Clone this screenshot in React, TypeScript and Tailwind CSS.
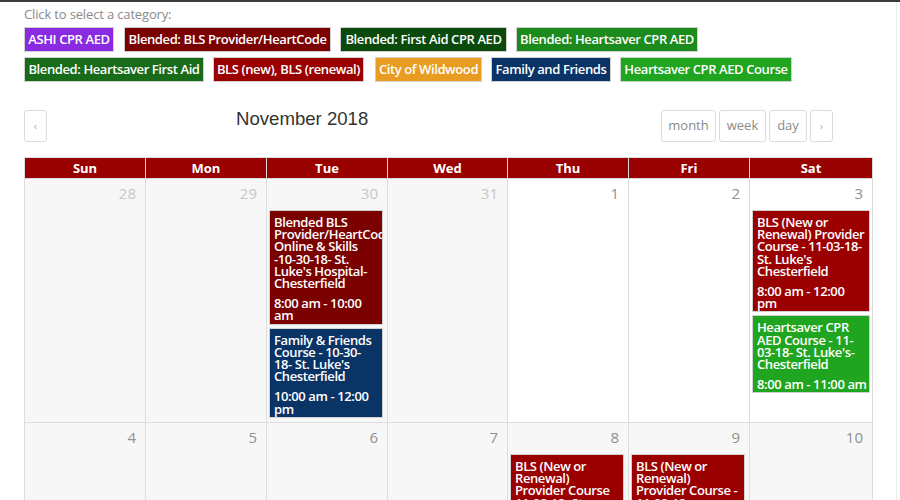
import React from "react";

type Tag = { label: string; cls: string };

const row1: Tag[] = [
  { label: "ASHI CPR AED", cls: "w-[90px] bg-[#8a2be2]" },
  { label: "Blended: BLS Provider/HeartCode", cls: "ml-[10px] w-[207px] bg-[#7b0000]" },
  { label: "Blended: First Aid CPR AED", cls: "ml-[9px] w-[167px] bg-[#0b4a0b]" },
  { label: "Blended: Heartsaver CPR AED", cls: "ml-[9px] w-[182px] bg-[#1c8a1c]" },
];
const row2: Tag[] = [
  { label: "Blended: Heartsaver First Aid", cls: "w-[180px] bg-[#186b18]" },
  { label: "BLS (new), BLS (renewal)", cls: "ml-[9px] w-[151px] bg-[#9b0000]" },
  { label: "City of Wildwood", cls: "ml-[11px] w-[107px] bg-[#e89c22]" },
  { label: "Family and Friends", cls: "ml-[9px] w-[120px] bg-[#0a3366]" },
  { label: "Heartsaver CPR AED Course", cls: "ml-[9px] w-[172px] bg-[#20a520]" },
];

type Ev = { lines: string[]; time: string[]; bg: string; mr?: string };

type Day = { n: number; other?: boolean; gray?: boolean; events?: Ev[] };

const week1: Day[] = [
  { n: 28, other: true, gray: true },
  { n: 29, other: true, gray: true },
  {
    n: 30,
    other: true,
    gray: true,
    events: [
      {
        lines: ["Blended BLS", "Provider/HeartCode", "Online & Skills", "-10-30-18- St.", "Luke's Hospital-", "Chesterfield"],
        time: ["8:00 am - 10:00", "am"],
        bg: "bg-[#7b0000]",
      },
      {
        lines: ["Family & Friends", "Course - 10-30-", "18- St. Luke's", "Chesterfield"],
        time: ["10:00 am - 12:00", "pm"],
        bg: "bg-[#0a3366]",
      },
    ],
  },
  { n: 31, other: true, gray: true },
  { n: 1 },
  { n: 2 },
  {
    n: 3,
    events: [
      {
        lines: ["BLS (New or", "Renewal) Provider", "Course - 11-03-18-", "St. Luke's", "Chesterfield"],
        time: ["8:00 am - 12:00", "pm"],
        bg: "bg-[#9b0000]",
        mr: "mr-[2px]",
      },
      {
        lines: ["Heartsaver CPR", "AED Course - 11-", "03-18- St. Luke's-", "Chesterfield"],
        time: ["8:00 am - 11:00 am"],
        bg: "bg-[#20a520]",
        mr: "mr-[2px]",
      },
    ],
  },
];

const week2: Day[] = [
  { n: 4, gray: true },
  { n: 5, gray: true },
  { n: 6, gray: true },
  { n: 7, gray: true },
  {
    n: 8,
    gray: true,
    events: [
      {
        lines: ["BLS (New or", "Renewal)", "Provider Course", "11-08-18- St."],
        time: [],
        bg: "bg-[#9b0000]",
      },
    ],
  },
  {
    n: 9,
    gray: true,
    events: [
      {
        lines: ["BLS (New or", "Renewal)", "Provider Course -", "11-09-18-"],
        time: [],
        bg: "bg-[#9b0000]",
      },
    ],
  },
  { n: 10, gray: true },
];

function EventBox({ ev, idx }: { ev: Ev; idx: number }) {
  return (
    <div
      className={`${idx === 0 ? "" : "mt-[3px]"} ml-[2px] ${ev.mr ?? "mr-[4px]"} ${ev.bg} border border-[#d2d2d2] pt-[5px] pl-[4px] pr-[2px] pb-[2px] text-white text-[13px] tracking-[-0.4px] font-semibold overflow-hidden`}
    >
      {ev.lines.map((l, i) => (
        <div key={i} className="leading-[12.2px] whitespace-nowrap">
          {l}
        </div>
      ))}
      {ev.time.length > 0 && (
        <div className="mt-[8px]">
          {ev.time.map((l, i) => (
            <div key={i} className="leading-[12.2px] whitespace-nowrap">
              {l}
            </div>
          ))}
        </div>
      )}
      {ev.time.length === 0 && <div className="h-[40px]" />}
    </div>
  );
}

function Cell({ d, h }: { d: Day; h: string }) {
  return (
    <div className={`${h} border-r border-b border-[#dddddd] ${d.gray ? "bg-[#f7f7f7]" : "bg-white"} overflow-hidden`}>
      <div
        className={`h-[31px] pt-[4px] pr-[9px] text-right text-[15px] leading-[20px] ${
          d.other ? "text-[#c6c6c6]" : "text-[#909090]"
        }`}
      >
        {d.n}
      </div>
      {d.events?.map((ev, i) => (
        <EventBox key={i} ev={ev} idx={i} />
      ))}
    </div>
  );
}

function Btn({ children, cls }: { children: React.ReactNode; cls: string }) {
  return (
    <div
      className={`${cls} h-[32px] flex items-center justify-center border border-[#dcdcdc] rounded-[3px] bg-white text-[#8a8a8a] text-[13px]`}
    >
      {children}
    </div>
  );
}

const cols = "grid grid-cols-[121px_121px_121px_120px_121px_121px_123px]";

export default function App() {
  return (
    <div className="w-[900px] h-[500px] overflow-hidden bg-white border-t-2 border-[#3c3c3c] font-['Open_Sans',sans-serif]">
      <div className="w-[897px] h-full border-r border-[#ebebeb] pl-[24px]">
        <div className="pt-[3px] text-[13px] tracking-[-0.15px] leading-[18px] text-[#8a8a8a]">Click to select a category:</div>
        <div className="mt-[4px] flex flex-col gap-[5px]">
          {[row1, row2].map((row, ri) => (
            <div key={ri} className="flex">
              {row.map((t) => (
                <div
                  key={t.label}
                  className={`${t.cls} h-[25px] border border-[#d0d0d0] flex items-center justify-center text-white text-[13px] tracking-[-0.4px] font-semibold whitespace-nowrap overflow-hidden`}
                >
                  {t.label}
                </div>
              ))}
            </div>
          ))}
        </div>

        <div className="mt-[28px] w-[849px] flex items-start">
          <Btn cls="w-[23px]">
            <span className="text-[11px] text-[#b0b0b0]">‹</span>
          </Btn>
          <div className="ml-[189px] -mt-[2px] text-[18.6px] leading-[21px] text-[#333333] font-['Liberation_Sans',Arial,sans-serif]">
            November 2018
          </div>
          <div className="ml-auto mr-[40px] flex gap-[3px]">
            <Btn cls="w-[55px]">month</Btn>
            <Btn cls="w-[47px]">week</Btn>
            <Btn cls="w-[38px]">day</Btn>
            <Btn cls="w-[23px]">
              <span className="text-[11px] text-[#b0b0b0]">›</span>
            </Btn>
          </div>
        </div>

        <div className="mt-[15px] w-[849px] border-l border-t border-[#dddddd]">
          <div className={`${cols} bg-[#990000]`}>
            {["Sun", "Mon", "Tue", "Wed", "Thu", "Fri", "Sat"].map((d) => (
              <div
                key={d}
                className="h-[21px] border-r border-b border-[#d9d9d9] text-center text-white font-bold text-[13px] leading-[20px]"
              >
                {d}
              </div>
            ))}
          </div>
          <div className={cols}>
            {week1.map((d) => (
              <Cell key={d.n} d={d} h="h-[244px]" />
            ))}
          </div>
          <div className={cols}>
            {week2.map((d) => (
              <Cell key={d.n} d={d} h="h-[200px]" />
            ))}
          </div>
        </div>
      </div>
    </div>
  );
}
